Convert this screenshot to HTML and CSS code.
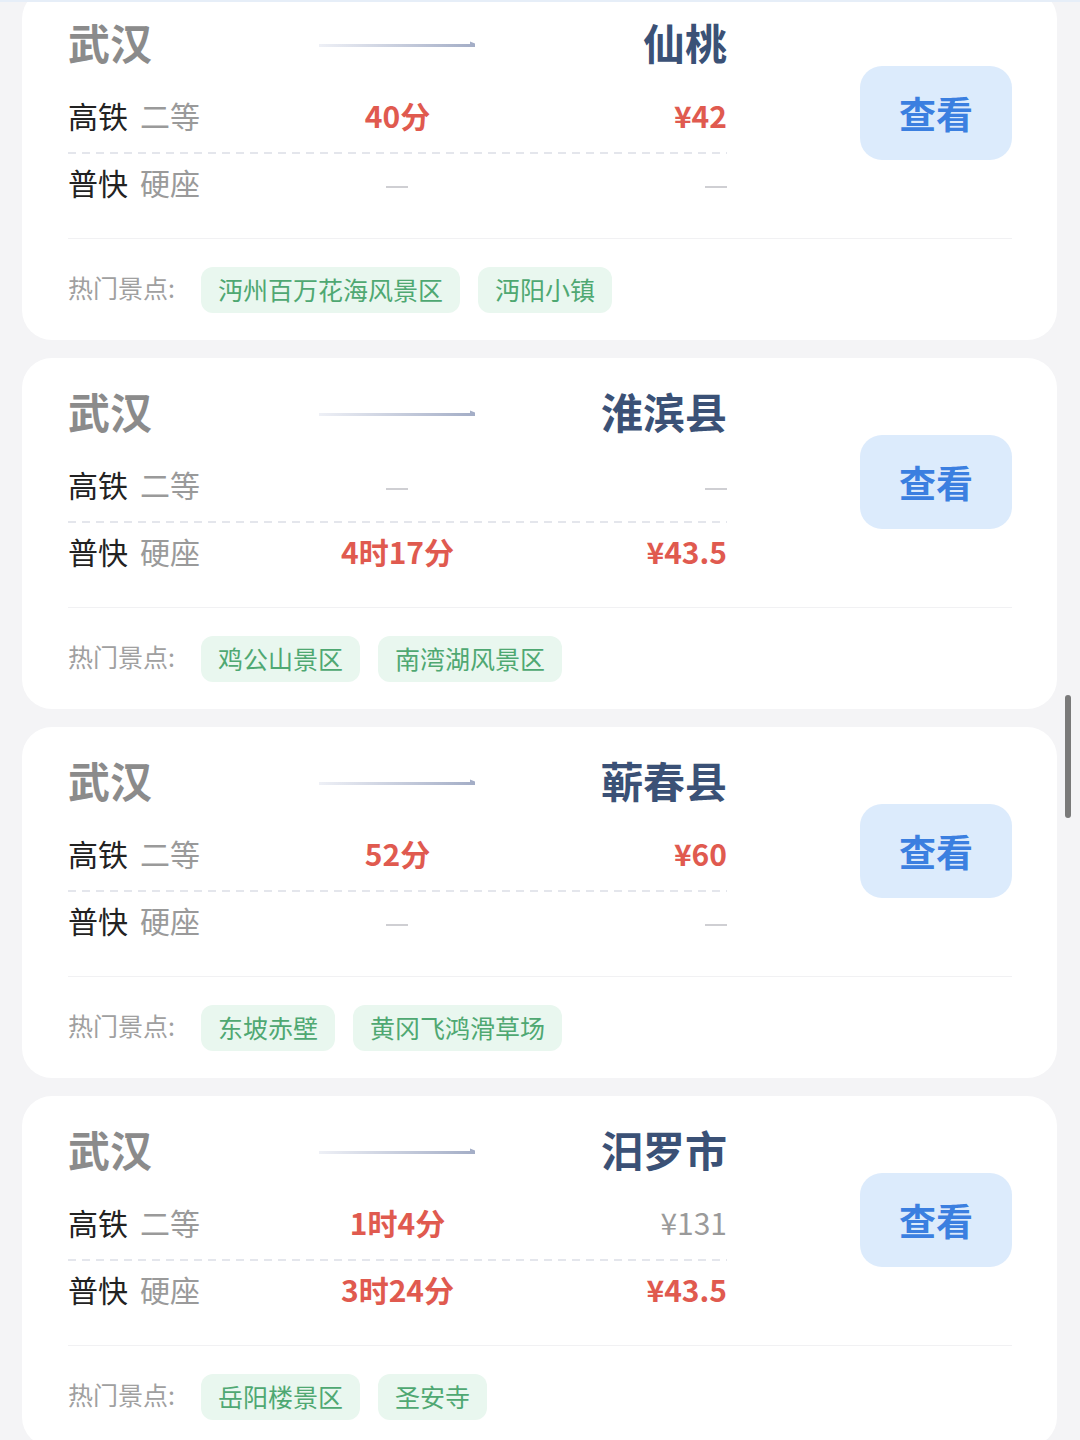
FILE: index.html
```html
<!DOCTYPE html>
<html lang="zh-CN">
<head>
    <meta charset="UTF-8">
    <meta name="viewport" content="width=device-width, initial-scale=1.0">
    <title>武汉出发</title>
    <link rel="stylesheet" href="styles.css">
</head>
<body>

    <div class="top-edge"></div>

    <div class="list">

        <!-- 仙桃 -->
        <div class="card">
            <div class="main">
                <div class="info">
                    <div class="route">
                        <span class="from">武汉</span>
                        <span class="arrow"><svg width="156" height="8" viewBox="0 0 156 8"><defs><linearGradient id="g1" x1="0" x2="1"><stop offset="0" stop-color="#eef0f6"/><stop offset="1" stop-color="#a3adc6"/></linearGradient></defs><path d="M0 6H156V2.5L151 0.5V3H0Z" fill="url(#g1)"/></svg></span>
                        <span class="to">仙桃</span>
                    </div>
                    <div class="row first">
                        <span class="kind">高铁<em>二等</em></span>
                        <span class="time">40分</span>
                        <span class="price">¥42</span>
                    </div>
                    <div class="row">
                        <span class="kind">普快<em>硬座</em></span>
                        <span class="time"><i class="none"></i></span>
                        <span class="price"><i class="none"></i></span>
                    </div>
                </div>
                <button class="view">查看</button>
            </div>
            <div class="spots">
                <span class="label">热门景点:</span>
                <span class="tag">沔州百万花海风景区</span>
                <span class="tag">沔阳小镇</span>
            </div>
        </div>

        <!-- 淮滨县 -->
        <div class="card">
            <div class="main">
                <div class="info">
                    <div class="route">
                        <span class="from">武汉</span>
                        <span class="arrow"><svg width="156" height="8" viewBox="0 0 156 8"><defs><linearGradient id="g2" x1="0" x2="1"><stop offset="0" stop-color="#eef0f6"/><stop offset="1" stop-color="#a3adc6"/></linearGradient></defs><path d="M0 6H156V2.5L151 0.5V3H0Z" fill="url(#g2)"/></svg></span>
                        <span class="to">淮滨县</span>
                    </div>
                    <div class="row first">
                        <span class="kind">高铁<em>二等</em></span>
                        <span class="time"><i class="none"></i></span>
                        <span class="price"><i class="none"></i></span>
                    </div>
                    <div class="row">
                        <span class="kind">普快<em>硬座</em></span>
                        <span class="time">4时17分</span>
                        <span class="price">¥43.5</span>
                    </div>
                </div>
                <button class="view">查看</button>
            </div>
            <div class="spots">
                <span class="label">热门景点:</span>
                <span class="tag">鸡公山景区</span>
                <span class="tag">南湾湖风景区</span>
            </div>
        </div>

        <!-- 蕲春县 -->
        <div class="card">
            <div class="main">
                <div class="info">
                    <div class="route">
                        <span class="from">武汉</span>
                        <span class="arrow"><svg width="156" height="8" viewBox="0 0 156 8"><defs><linearGradient id="g3" x1="0" x2="1"><stop offset="0" stop-color="#eef0f6"/><stop offset="1" stop-color="#a3adc6"/></linearGradient></defs><path d="M0 6H156V2.5L151 0.5V3H0Z" fill="url(#g3)"/></svg></span>
                        <span class="to">蕲春县</span>
                    </div>
                    <div class="row first">
                        <span class="kind">高铁<em>二等</em></span>
                        <span class="time">52分</span>
                        <span class="price">¥60</span>
                    </div>
                    <div class="row">
                        <span class="kind">普快<em>硬座</em></span>
                        <span class="time"><i class="none"></i></span>
                        <span class="price"><i class="none"></i></span>
                    </div>
                </div>
                <button class="view">查看</button>
            </div>
            <div class="spots">
                <span class="label">热门景点:</span>
                <span class="tag">东坡赤壁</span>
                <span class="tag">黄冈飞鸿滑草场</span>
            </div>
        </div>

        <!-- 汨罗市 -->
        <div class="card">
            <div class="main">
                <div class="info">
                    <div class="route">
                        <span class="from">武汉</span>
                        <span class="arrow"><svg width="156" height="8" viewBox="0 0 156 8"><defs><linearGradient id="g4" x1="0" x2="1"><stop offset="0" stop-color="#eef0f6"/><stop offset="1" stop-color="#a3adc6"/></linearGradient></defs><path d="M0 6H156V2.5L151 0.5V3H0Z" fill="url(#g4)"/></svg></span>
                        <span class="to">汨罗市</span>
                    </div>
                    <div class="row first">
                        <span class="kind">高铁<em>二等</em></span>
                        <span class="time">1时4分</span>
                        <span class="price plain">¥131</span>
                    </div>
                    <div class="row">
                        <span class="kind">普快<em>硬座</em></span>
                        <span class="time">3时24分</span>
                        <span class="price">¥43.5</span>
                    </div>
                </div>
                <button class="view">查看</button>
            </div>
            <div class="spots">
                <span class="label">热门景点:</span>
                <span class="tag">岳阳楼景区</span>
                <span class="tag">圣安寺</span>
            </div>
        </div>

    </div>

    <div class="scrollbar"></div>

</body>
</html>
```

FILE: styles.css
```css
body {
    margin: 0;
    background-color: #f4f4f6;
    font-family: "Noto Sans CJK SC", "Noto Sans", sans-serif;
    color: #222;
    overflow: hidden;
}

.top-edge {
    position: fixed;
    top: 0;
    left: 0;
    right: 0;
    height: 2px;
    background-color: #e6eef8;
    z-index: 2;
}

.list {
    display: flex;
    flex-direction: column;
    gap: 18px;
    padding: 0 23px 0 22px;
    margin-top: -11px;
}

.card {
    background-color: #fff;
    border-radius: 30px;
    height: 351px;
    box-sizing: border-box;
    padding: 25px 45px 0 46px;
}

.main {
    display: flex;
    justify-content: space-between;
    align-items: flex-start;
    border-bottom: 1px solid #f1f1f3;
    padding-bottom: 28px;
}

.info {
    width: 659px;
}

.route,
.row {
    display: grid;
    grid-template-columns: 1fr 1fr 1fr;
    align-items: center;
    height: 56px;
}

.from {
    font-size: 42px;
    font-weight: bold;
    color: #8b8b8b;
    line-height: 56px;
}

.arrow {
    display: flex;
    justify-content: center;
    padding-top: 6px;
}

.to {
    font-size: 42px;
    font-weight: bold;
    color: #3b5176;
    text-align: right;
    line-height: 56px;
}

.route {
    margin-bottom: 16px;
}

.row.first {
    height: 58px;
    padding-bottom: 10px;
    background-image: linear-gradient(to right, #e4e6ec 8px, transparent 8px);
    background-size: 14px 2px;
    background-repeat: repeat-x;
    background-position: left bottom;
}

.kind {
    font-size: 30px;
    line-height: 56px;
    white-space: nowrap;
}

.kind em {
    font-style: normal;
    color: #9a9a9a;
    margin-left: 12px;
}

.time {
    font-size: 30px;
    font-weight: bold;
    color: #e05a4f;
    text-align: center;
}

.price {
    font-size: 30px;
    font-weight: bold;
    color: #e05a4f;
    text-align: right;
}

.price.plain {
    font-weight: normal;
    color: #9a9a9a;
}

.none {
    display: inline-block;
    width: 22px;
    height: 2px;
    background-color: #cfcfd3;
    vertical-align: middle;
}

.view {
    margin-top: 52px;
    width: 152px;
    height: 94px;
    border: none;
    border-radius: 22px;
    background-color: #dcebfc;
    color: #3b7fe0;
    font-family: inherit;
    font-size: 37px;
    font-weight: bold;
    padding: 0;
}

.spots {
    display: flex;
    align-items: center;
    gap: 18px;
    padding-top: 28px;
}

.label {
    font-size: 25px;
    color: #a0a0a0;
    margin-right: 8px;
    position: relative;
    top: -3px;
}

.tag {
    height: 46px;
    line-height: 44px;
    padding: 0 17px;
    border-radius: 12px;
    background-color: #e9f7ef;
    color: #4fa872;
    font-size: 25px;
}

.scrollbar {
    position: fixed;
    top: 695px;
    right: 9px;
    width: 6px;
    height: 123px;
    border-radius: 3px;
    background-color: #7a7a7a;
}
```
